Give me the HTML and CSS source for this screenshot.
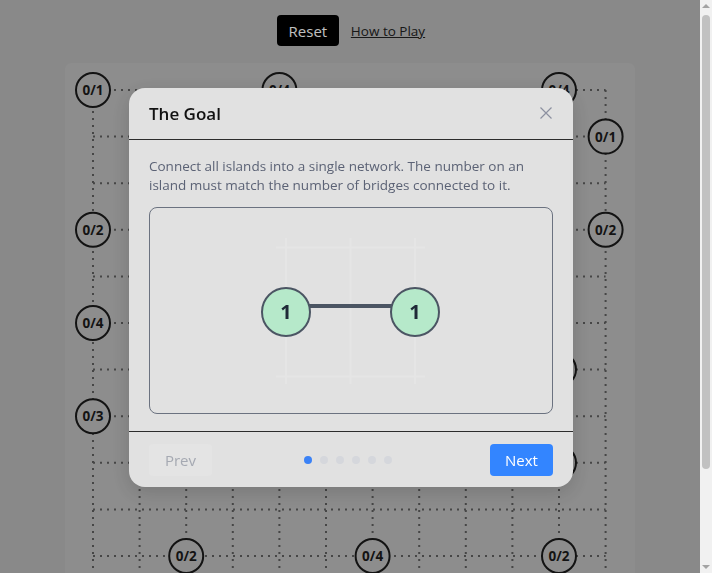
FILE: index.html
```html
<!DOCTYPE html>
<html>
	<head>
		<meta charset="utf-8">
		<title>Bridges</title>
		<link rel="stylesheet" href="styles.css">
	</head>
	<body>
		<div class="page">
			<div class="top">
				<button class="reset">Reset</button>
				<a class="help" href="#">How to Play</a>
			</div>

			<div class="board">
				<svg class="grid" width="570" height="613" viewBox="0 0 570 613">
					<g class="lines" transform="translate(28 27)">
						<path d="M0 0V559.2M46.6 0V559.2M93.2 0V559.2M139.8 0V559.2M186.4 0V559.2M233 0V559.2M279.6 0V559.2M326.2 0V559.2M372.8 0V559.2M419.4 0V559.2M466 0V559.2M512.6 0V559.2"/>
						<path d="M0 0H512.6M0 46.6H512.6M0 93.2H512.6M0 139.8H512.6M0 186.4H512.6M0 233H512.6M0 279.6H512.6M0 326.2H512.6M0 372.8H512.6M0 419.4H512.6M0 466H512.6M0 512.6H512.6M0 559.2H512.6"/>
					</g>
					<g class="islands" transform="translate(28 27)">
						<g transform="translate(0 0)"><circle r="17"/><text y="5">0/1</text></g>
						<g transform="translate(186.4 0)"><circle r="17"/><text y="5">0/4</text></g>
						<g transform="translate(466 0)"><circle r="17"/><text y="5">0/4</text></g>
						<g transform="translate(512.6 46.6)"><circle r="17"/><text y="5">0/1</text></g>
						<g transform="translate(0 139.8)"><circle r="17"/><text y="5">0/2</text></g>
						<g transform="translate(512.6 139.8)"><circle r="17"/><text y="5">0/2</text></g>
						<g transform="translate(0 233)"><circle r="17"/><text y="5">0/4</text></g>
						<g transform="translate(466 279.6)"><circle r="17"/><text y="5">0/3</text></g>
						<g transform="translate(0 326.2)"><circle r="17"/><text y="5">0/3</text></g>
						<g transform="translate(466 372.8)"><circle r="17"/><text y="5">0/2</text></g>
						<g transform="translate(93.2 466)"><circle r="17"/><text y="5">0/2</text></g>
						<g transform="translate(279.6 466)"><circle r="17"/><text y="5">0/4</text></g>
						<g transform="translate(466 466)"><circle r="17"/><text y="5">0/2</text></g>
					</g>
				</svg>
			</div>
		</div>

		<div class="overlay">
			<div class="modal">
				<div class="modal-head">
					<h2>The Goal</h2>
					<svg class="close" width="12" height="12" viewBox="0 0 12 12"><path d="M0.5 0.5L11.5 11.5M11.5 0.5L0.5 11.5"/></svg>
				</div>
				<div class="modal-body">
					<p>Connect all islands into a single network. The number on an island must match the number of bridges connected to it.</p>
					<div class="demo">
						<svg width="401" height="205" viewBox="0 0 401 205">
							<g class="demo-grid">
								<path d="M136 30V176M200.5 30V176M265 30V176M126 39.5H275M126 168.5H275"/>
							</g>
							<line class="bridge" x1="150" y1="98" x2="252" y2="98"/>
							<g class="node" transform="translate(136 104)"><circle r="24"/><text y="7">1</text></g>
							<g class="node" transform="translate(265 104)"><circle r="24"/><text y="7">1</text></g>
						</svg>
					</div>
				</div>
				<div class="modal-foot">
					<button class="btn prev" disabled>Prev</button>
					<ul class="dots">
						<li class="dot on"></li>
						<li class="dot"></li>
						<li class="dot"></li>
						<li class="dot"></li>
						<li class="dot"></li>
						<li class="dot"></li>
					</ul>
					<button class="btn next">Next</button>
				</div>
			</div>
		</div>

		<div class="scrollbar">
			<span class="arrow up"></span>
			<span class="thumb"></span>
			<span class="arrow down"></span>
		</div>
	</body>
</html>
```

FILE: styles.css
```css
*{
	margin: 0;
	padding: 0;
	box-sizing: border-box;
}
body{
	background-color: #b7b7b7;
	font-family: "Open Sans", "Noto Sans", sans-serif;
	overflow: hidden;
}
ul{
	list-style: none;
}
.page{
	width: 700px;
	padding-bottom: 11px;
}
.top{
	display: flex;
	justify-content: center;
	align-items: center;
	gap: 12px;
	padding-top: 15px;
	height: 46px;
	padding-left: 2px;
}
.reset{
	width: 62px;
	height: 31px;
	background-color: #000;
	color: #fff;
	border: none;
	border-radius: 4px;
	font-family: inherit;
	font-size: 15px;
}
.help{
	color: #222;
	font-size: 13.5px;
	text-decoration: underline;
}
.board{
	width: 570px;
	margin: 17px auto 0;
	background-color: #bcbcbc;
	border-radius: 6px;
}
.grid{
	display: block;
}
.grid .lines path{
	fill: none;
	stroke: #5e5e5e;
	stroke-width: 2;
	stroke-dasharray: 2 5;
}
.grid .islands circle{
	fill: #bcbcbc;
	stroke: #1a1a1a;
	stroke-width: 2;
}
.grid .islands text{
	font-family: "Open Sans", sans-serif;
	font-weight: 700;
	font-size: 13.5px;
	fill: #1a1a1a;
	text-anchor: middle;
}
.overlay{
	position: fixed;
	left: 0;
	top: 0;
	width: 700px;
	bottom: 0;
	background-color: rgba(0,0,0,0.25);
	display: flex;
	align-items: center;
	justify-content: center;
}
.modal{
	width: 444px;
	background-color: #e1e1e1;
	border-radius: 16px;
	box-shadow: 0 6px 20px rgba(0,0,0,0.15);
	margin: 1px 0 0 2px;
}
.modal-head{
	height: 52px;
	display: flex;
	align-items: center;
	justify-content: space-between;
	padding: 0 21px 0 20px;
	border-bottom: 1px solid #2c2c2c;
}
.modal-head h2{
	font-size: 17px;
	font-weight: 600;
	color: #111;
}
.close path{
	stroke: #8c90a0;
	stroke-width: 1.2;
	fill: none;
}
.modal-body{
	padding: 17px 20px 17px;
}
.modal-body p{
	font-size: 13.5px;
	line-height: 19px;
	color: #5b6275;
}
.demo{
	margin-top: 12px;
	height: 207px;
	border: 1px solid #6b7280;
	border-radius: 8px;
}
.demo svg{
	display: block;
}
.demo-grid path{
	fill: none;
	stroke: #e5e5e5;
	stroke-width: 2;
}
.bridge{
	stroke: #4b5563;
	stroke-width: 4;
}
.node circle{
	fill: #b6e9ca;
	stroke: #4b5563;
	stroke-width: 2;
}
.node text{
	font-family: "Open Sans", sans-serif;
	font-weight: 700;
	font-size: 20px;
	fill: #1f2937;
	text-anchor: middle;
}
.modal-foot{
	border-top: 1px solid #2c2c2c;
	padding: 12px 20px 11px;
	display: flex;
	align-items: center;
	justify-content: space-between;
}
.btn{
	width: 63px;
	height: 32px;
	border: none;
	border-radius: 4px;
	font-family: inherit;
	font-size: 15px;
}
.prev{
	background-color: #e4e4e4;
	color: #a5a9b2;
}
.next{
	background-color: #3385ff;
	color: #fff;
}
.dots{
	display: flex;
	gap: 8px;
	margin-right: 6px;
}
.dot{
	width: 8px;
	height: 8px;
	border-radius: 50%;
	background-color: #d5d7dc;
}
.dot.on{
	background-color: #3b82f6;
}
.scrollbar{
	position: fixed;
	right: 0;
	top: 0;
	bottom: 0;
	width: 12px;
	background-color: #f1f1f1;
	display: flex;
	flex-direction: column;
	align-items: center;
}
.arrow{
	width: 0;
	height: 0;
	border-left: 4px solid transparent;
	border-right: 4px solid transparent;
	margin: 4px 0;
}
.arrow.up{
	border-bottom: 4px solid #a3a3a3;
}
.arrow.down{
	border-top: 4px solid #a3a3a3;
	margin-top: auto;
}
.thumb{
	width: 8px;
	height: 454px;
	margin-top: 3px;
	background-color: #c1c1c1;
	border-radius: 4px;
}
```
